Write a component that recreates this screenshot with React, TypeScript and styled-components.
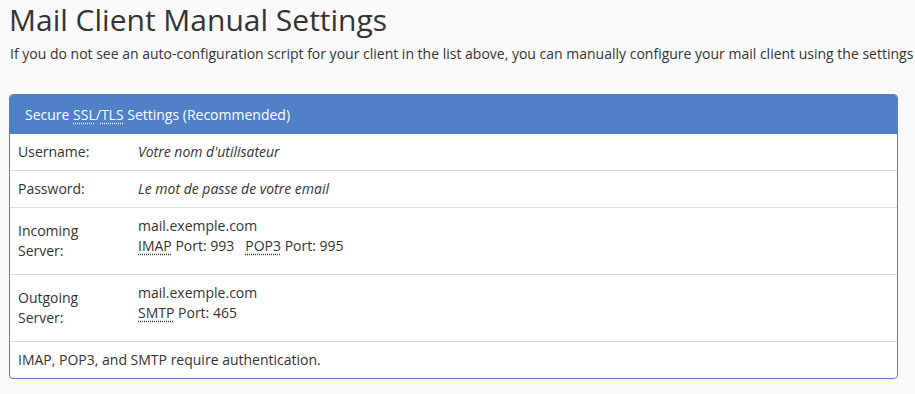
import React from "react";
import styled, { createGlobalStyle } from "styled-components";

const Global = createGlobalStyle`
  html, body { margin: 0; padding: 0; background: #fafafa; overflow: hidden; }
  body { font-family: "Open Sans", "Liberation Sans", sans-serif; color: #333; font-size: 14px; line-height: 20px; }
`;

const Page = styled.div`
  padding: 0 17px 0 9px;
`;

const Title = styled.h1`
  margin: 0;
  padding-top: 3px;
  font-size: 30px;
  font-weight: 400;
  line-height: 33px;
  color: #333;
`;

const Intro = styled.p`
  margin: 8px 0 30px 1px;
  white-space: nowrap;
  font-size: 14px;
  line-height: 20px;
`;

const Panel = styled.section`
  border: 1px solid #4f7fc7;
  border-radius: 4px;
  background: #fff;
  overflow: hidden;
`;

const PanelHeader = styled.div`
  background: #4f80c8;
  color: #fff;
  height: 39px;
  padding: 0 15px;
  display: flex;
  align-items: center;
`;

const Row = styled.div`
  display: grid;
  grid-template-columns: 120px 1fr;
  border-top: 1px solid #ddd;
  &:first-of-type { border-top: none; }
`;

const Label = styled.div`
  padding: 8px;
  display: flex;
  align-items: center;
`;

const Value = styled.div<{ $italic?: boolean; $extra?: boolean }>`
  padding: 8px 8px ${(p) => (p.$extra ? "18px" : "8px")};
  font-style: ${(p) => (p.$italic ? "italic" : "normal")};
`;

const Note = styled.div`
  padding: 8px;
  border-top: 1px solid #ddd;
`;

const Abbr = styled.abbr`
  text-decoration: underline dotted;
  text-underline-offset: 3px;
  cursor: help;
`;

const Gap = styled.span`
  display: inline-block;
  width: 11px;
`;

export default function App() {
  return (
    <Page>
      <Global />
      <Title>Mail Client Manual Settings</Title>
      <Intro>
        If you do not see an auto-configuration script for your client in the list above, you can manually configure your mail client using the settings
      </Intro>
      <Panel>
        <PanelHeader>
          <span>
            Secure <Abbr title="Secure Sockets Layer">SSL</Abbr>/<Abbr title="Transport Layer Security">TLS</Abbr> Settings (Recommended)
          </span>
        </PanelHeader>
        <div>
          <Row>
            <Label>Username:</Label>
            <Value $italic>Votre nom d'utilisateur</Value>
          </Row>
          <Row>
            <Label>Password:</Label>
            <Value $italic>Le mot de passe de votre email</Value>
          </Row>
          <Row>
            <Label>Incoming<br />Server:</Label>
            <Value $extra>
              <div>mail.exemple.com</div>
              <div>
                <Abbr title="Internet Message Access Protocol">IMAP</Abbr> Port: 993<Gap />
                <Abbr title="Post Office Protocol 3">POP3</Abbr> Port: 995
              </div>
            </Value>
          </Row>
          <Row>
            <Label>Outgoing<br />Server:</Label>
            <Value $extra>
              <div>mail.exemple.com</div>
              <div>
                <Abbr title="Simple Mail Transfer Protocol">SMTP</Abbr> Port: 465
              </div>
            </Value>
          </Row>
          <Note>IMAP, POP3, and SMTP require authentication.</Note>
        </div>
      </Panel>
    </Page>
  );
}
